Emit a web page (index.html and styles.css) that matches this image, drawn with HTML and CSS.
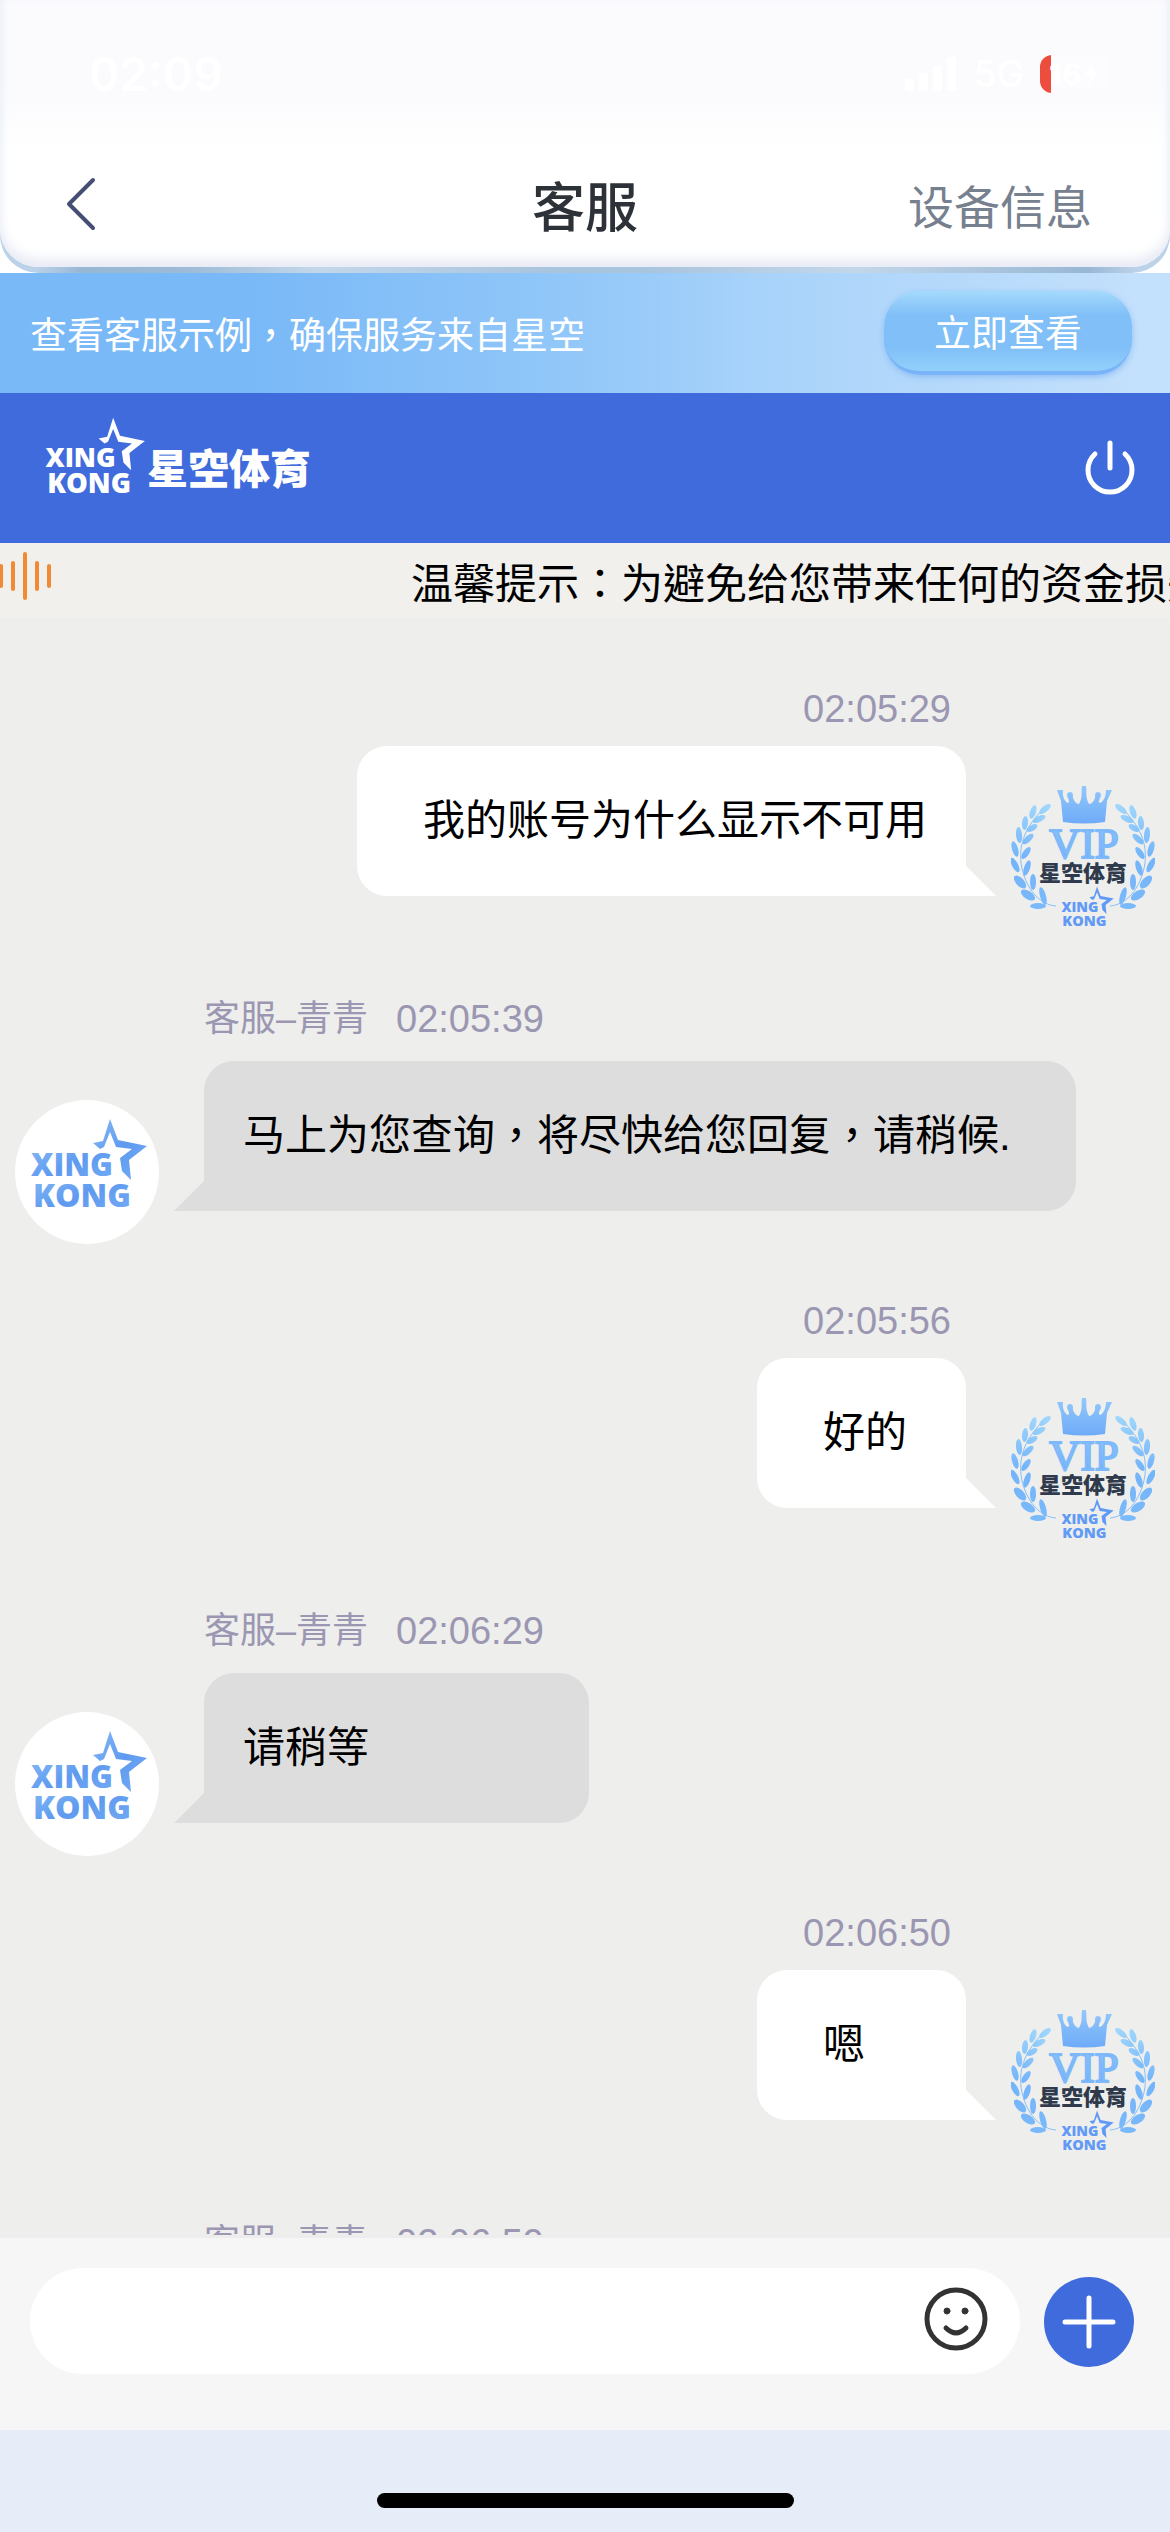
FILE: index.html
```html
<!DOCTYPE html>
<html lang="zh-Hant">
<head>
  <meta charset="UTF-8">
  <meta name="viewport" content="width=device-width, initial-scale=1.0">
  <title>客服</title>
  <link rel="stylesheet" href="styles.css">
</head>
<body>
  <!-- Shared drawings -->
  <svg class="sprite" aria-hidden="true">
    <defs>
      <linearGradient id="blue" x1="0" y1="0" x2="0" y2="1">
        <stop offset="0" stop-color="#93c8fb"/>
        <stop offset="1" stop-color="#6eabf8"/>
      </linearGradient>
      <linearGradient id="logo-blue" x1="0" y1="0" x2="1" y2="1">
        <stop offset="0" stop-color="#86bbf5"/>
        <stop offset="0.5" stop-color="#5f9af0"/>
        <stop offset="1" stop-color="#74acf4"/>
      </linearGradient>
      <linearGradient id="laurel-blue" gradientUnits="userSpaceOnUse" x1="0" y1="20" x2="0" y2="124">
        <stop offset="0" stop-color="#9ed6fc"/>
        <stop offset="0.5" stop-color="#74b4fa"/>
        <stop offset="1" stop-color="#7ab9fa"/>
      </linearGradient>
      <symbol id="logo" viewBox="16 18 118 91">
        <path d="M95 19L103 40L132 46L114 60L116 80L107 71L105 58L117 49L101 47L95 32L89 47L85 49L78 43L88 41Z"/>
        <text x="16" y="76" font-size="31">XING</text>
        <text x="18" y="107" font-size="32">KONG</text>
      </symbol>
      <g id="laurel">
        <path d="M45 121C30 120 14 105 10 78C8 58 14 42 34 22" fill="none" stroke="#84c0fa" stroke-width="1"/>
        <ellipse cx="22" cy="27" rx="3" ry="7" transform="rotate(18 22 27)"/>
        <ellipse cx="14" cy="38" rx="3" ry="7" transform="rotate(5 14 38)"/>
        <ellipse cx="8" cy="50" rx="3" ry="8" transform="rotate(-5 8 50)"/>
        <ellipse cx="4" cy="64" rx="3" ry="8" transform="rotate(-16 4 64)"/>
        <ellipse cx="4" cy="80" rx="3" ry="8" transform="rotate(-28 4 80)"/>
        <ellipse cx="9" cy="97" rx="4" ry="8" transform="rotate(-42 9 97)"/>
        <ellipse cx="17" cy="110" rx="4" ry="8" transform="rotate(-58 17 110)"/>
        <ellipse cx="27" cy="121" rx="8" ry="3"/>
        <ellipse cx="34" cy="24" rx="3" ry="7" transform="rotate(52 34 24)"/>
        <ellipse cx="28" cy="34" rx="3" ry="7" transform="rotate(65 28 34)"/>
        <ellipse cx="21" cy="43" rx="3" ry="6" transform="rotate(60 21 43)"/>
        <ellipse cx="17" cy="54" rx="3" ry="7" transform="rotate(48 17 54)"/>
        <ellipse cx="15" cy="68" rx="3" ry="7" transform="rotate(35 15 68)"/>
        <ellipse cx="16" cy="83" rx="3" ry="8" transform="rotate(18 16 83)"/>
        <ellipse cx="22" cy="97" rx="3" ry="8" transform="rotate(0 22 97)"/>
        <ellipse cx="32" cy="111" rx="3" ry="9" transform="rotate(-16 32 111)"/>
      </g>
      <symbol id="vip" viewBox="0 0 144 144">
        <g fill="url(#laurel-blue)">
          <use href="#laurel"/>
          <use href="#laurel" transform="translate(144 0) scale(-1 1)"/>
        </g>
        <g fill="url(#blue)">
          <path d="M52 37L50 16L46 5L52 5C51 12 54 17 57 18C60 16 56 13 56 10C56 6 62 6 62 10C61 14 65 19 68 19C72 12 70 7 71 1L75 1C76 7 74 12 78 19C81 19 85 14 84 10C84 6 90 6 90 10C90 13 86 16 89 18C92 17 95 12 95 5L101 5L96 16L94 37Q73 40 52 37Z"/>
          <text class="vip-word" x="73" y="73">VIP</text>
        </g>
        <text class="vip-brand" x="72" y="96">星空体育</text>
        <use href="#logo" x="50" y="101" width="54" height="41" fill="#609af6"/>
      </symbol>
    </defs>
  </svg>

  <div class="app">
    <header class="header">
      <div class="header-panel">
        <div class="status">
          <span class="clock">02:09</span>
          <div class="status-right">
            <svg width="52" height="34" viewBox="0 0 52 34" fill="#fff">
              <rect x="0" y="22" width="9" height="12" rx="2"/>
              <rect x="14" y="16" width="9" height="18" rx="2"/>
              <rect x="28" y="9" width="9" height="25" rx="2"/>
              <rect x="42" y="0" width="9" height="34" rx="2"/>
            </svg>
            <span class="network">5G</span>
            <span class="battery">16
              <svg width="14" height="24" viewBox="0 0 14 24" fill="#fff"><path d="M10 0L0 14H6L4 24L14 9H8Z"/></svg>
            </span>
          </div>
        </div>
        <nav class="nav">
          <button class="icon-button back" aria-label="返回">
            <svg width="32" height="56" viewBox="0 0 32 56" fill="none" stroke="#454e74" stroke-width="4" stroke-linecap="round" stroke-linejoin="round">
              <path d="M28 4L4 28L28 52"/>
            </svg>
          </button>
          <h1>客服</h1>
          <a href="#" class="device">设备信息</a>
        </nav>
      </div>
    </header>

    <div class="promo">
      <span>查看客服示例，确保服务来自星空</span>
      <button class="promo-button">立即查看</button>
    </div>

    <div class="brand">
      <div class="brand-logo">
        <svg width="102" height="78" fill="#fff"><use href="#logo"/></svg>
        <span>星空体育</span>
      </div>
      <button class="icon-button" aria-label="退出">
        <svg width="54" height="56" viewBox="0 0 54 56" fill="none" stroke="#fff" stroke-width="5" stroke-linecap="round">
          <path d="M27 3V28"/>
          <path d="M12 14A22 22 0 1 0 42 14"/>
        </svg>
      </button>
    </div>

    <div class="notice">
      <svg width="52" height="50" viewBox="0 0 52 50" stroke="#f08a35" stroke-width="4" stroke-linecap="round">
        <path d="M1 15V35M13 12V38M25 3V47M37 12V38M49 15V35"/>
      </svg>
      <p>温馨提示：为避免给您带来任何的资金损失</p>
    </div>

    <main class="chat">
      <section class="message user">
        <div class="meta"><time>02:05:29</time></div>
        <div class="row">
          <p class="bubble">我的账号为什么显示不可用</p>
          <svg class="avatar"><use href="#vip"/></svg>
        </div>
      </section>

      <section class="message agent">
        <div class="meta"><span>客服–青青</span><time>02:05:39</time></div>
        <div class="row">
          <svg class="avatar" viewBox="0 0 144 144">
            <use href="#logo" x="16" y="18" width="118" height="91" fill="url(#logo-blue)"/>
          </svg>
          <p class="bubble">马上为您查询，将尽快给您回复，请稍候.</p>
        </div>
      </section>

      <section class="message user">
        <div class="meta"><time>02:05:56</time></div>
        <div class="row">
          <p class="bubble">好的</p>
          <svg class="avatar"><use href="#vip"/></svg>
        </div>
      </section>

      <section class="message agent">
        <div class="meta"><span>客服–青青</span><time>02:06:29</time></div>
        <div class="row">
          <svg class="avatar" viewBox="0 0 144 144">
            <use href="#logo" x="16" y="18" width="118" height="91" fill="url(#logo-blue)"/>
          </svg>
          <p class="bubble">请稍等</p>
        </div>
      </section>

      <section class="message user">
        <div class="meta"><time>02:06:50</time></div>
        <div class="row">
          <p class="bubble">嗯</p>
          <svg class="avatar"><use href="#vip"/></svg>
        </div>
      </section>

      <section class="message agent">
        <div class="meta"><span>客服–青青</span><time>02:06:59</time></div>
      </section>
    </main>

    <form class="composer">
      <div class="field">
        <input type="text" aria-label="消息">
        <button type="button" class="icon-button" aria-label="表情">
          <svg width="64" height="64" viewBox="0 0 64 64" fill="none" stroke="#333" stroke-width="5" stroke-linecap="round">
            <circle cx="32" cy="32" r="29"/>
            <path d="M22 41Q32 51 42 41"/>
            <circle cx="23" cy="24" r="3" fill="#333" stroke-width="1"/>
            <circle cx="41" cy="24" r="3" fill="#333" stroke-width="1"/>
          </svg>
        </button>
      </div>
      <button type="button" class="icon-button add" aria-label="更多">
        <svg width="54" height="54" viewBox="0 0 54 54" fill="none" stroke="#fff" stroke-width="5" stroke-linecap="round">
          <path d="M27 3V51M3 27H51"/>
        </svg>
      </button>
    </form>

    <footer class="home"><div class="home-bar"></div></footer>
  </div>
</body>
</html>
```
FILE: styles.css
```css
* {
  box-sizing: border-box;
}
body {
  margin: 0;
  background: #fff;
  color: #000;
  font-family: "Liberation Sans", "Noto Sans CJK TC", sans-serif;
  font-size: 42px;
}
h1, p {
  margin: 0;
}
button {
  border: none;
  padding: 0;
  font-family: inherit;
  cursor: pointer;
}
svg {
  display: block;
  flex: none;
}
.sprite {
  position: absolute;
  width: 0;
  height: 0;
}
.icon-button {
  background: none;
}
.app {
  display: flex;
  flex-direction: column;
  height: 100vh;
}

/* Header */
.header {
  flex: none;
  padding-bottom: 6px;
  border-radius: 0 0 38px 38px;
  background: linear-gradient(90deg, #bcd2e8 3%, #98b7d4 7%, #9dbbd7 16%, #c3d7e9 27%, #a9c4de 47%, #a9c4de 55%, #c3d7e9 73%, #98b7d4 93%, #bcd2e8 97%);
}
.header-panel {
  border-radius: 0 0 38px 38px;
  background: linear-gradient(#fbfbfe 90px, #fff 150px);
  box-shadow: inset 0 -8px 12px #e8ebf5, inset 0 0 6px #f6f7fc;
}
.status {
  display: flex;
  align-items: center;
  justify-content: space-between;
  height: 147px;
  padding: 0 60px 0 89px;
  color: #fff;
  font-family: Inter, sans-serif;
}
.clock {
  font-size: 46px;
  font-weight: 600;
}
.status-right {
  display: flex;
  align-items: center;
  gap: 16px;
}
.network {
  font-size: 37px;
  font-weight: 500;
}
.battery {
  display: flex;
  align-items: center;
  gap: 3px;
  width: 70px;
  height: 38px;
  padding-left: 9px;
  border-radius: 12px;
  background: linear-gradient(90deg, #ec4d3d 11px, #fcfcfe 11px);
  font-size: 30px;
  line-height: 38px;
  font-weight: 700;
}
.nav {
  display: grid;
  grid-template-columns: 1fr auto 1fr;
  align-items: center;
  height: 120px;
  padding: 0 65px 6px;
}
.back {
  justify-self: start;
}
.nav h1 {
  color: #2d3238;
  font-size: 53px;
  font-weight: 500;
}
.device {
  justify-self: end;
  margin-right: 13px;
  color: #76808e;
  font-size: 46px;
  text-decoration: none;
}

/* Promo strip */
.promo {
  flex: none;
  display: flex;
  align-items: center;
  justify-content: space-between;
  height: 120px;
  padding: 0 38px 0 30px;
  background: linear-gradient(90deg, #7ab9f7 22%, #93c8f9 50%, #a9d3fa 66%, #c3e0fc 97%);
  color: #fff;
  font-size: 37px;
}
.promo-button {
  width: 248px;
  height: 84px;
  border-bottom: 4px solid #79b3f8;
  border-radius: 36px;
  background: linear-gradient(#a4dafc, #80bff8 30%, #80bff8 70%, #92d0fb);
  box-shadow: 0 2px 6px #8dbdf5;
  color: #fff;
  font-size: 37px;
}

/* Brand bar */
.brand {
  flex: none;
  display: flex;
  align-items: center;
  justify-content: space-between;
  height: 150px;
  padding: 0 33px 0 45px;
  background: #3f6bdc;
}
.brand-logo {
  display: flex;
  align-items: flex-end;
  margin-bottom: 24px;
}
.brand-logo span {
  color: #fff;
  font-size: 41px;
  font-weight: 900;
  line-height: 50px;
}
#logo text {
  font-family: "Open Sans", sans-serif;
  font-weight: 800;
}
.vip-word {
  font-family: "Liberation Serif", serif;
  font-size: 43px;
  stroke: #7db9fa;
  stroke-width: 2px;
  text-anchor: middle;
}
.vip-brand {
  fill: #2f3b4c;
  font-size: 22px;
  font-weight: 900;
  text-anchor: middle;
}

/* Scrolling notice */
.notice {
  flex: none;
  display: flex;
  align-items: center;
  gap: 359px;
  height: 75px;
  background: #f1f0ed;
  overflow: hidden;
}
.notice svg {
  margin-bottom: 10px;
}
.notice p {
  flex: none;
  white-space: nowrap;
}

/* Chat */
.chat {
  flex: 1;
  min-height: 0;
  padding-top: 66px;
  border-bottom: 3px solid #ededed;
  background: #eeeeec;
  overflow: hidden;
}
.meta {
  display: flex;
  gap: 28px;
  color: #9b97b2;
  font-size: 36px;
  line-height: 50px;
}
.meta time {
  font-size: 38px;
}
.row {
  display: flex;
  align-items: flex-start;
}
.bubble {
  position: relative;
  padding: 45px 39px;
  border-radius: 30px;
  line-height: 60px;
}
.bubble::after {
  content: "";
  position: absolute;
  bottom: 0;
  width: 30px;
  height: 30px;
}
.avatar {
  width: 144px;
  height: 144px;
  margin-top: 39px;
}
.user {
  margin-bottom: 65px;
}
.user .meta {
  justify-content: flex-end;
  margin-bottom: 12px;
  padding-right: 219px;
}
.user .row {
  justify-content: flex-end;
  gap: 45px;
  padding-right: 15px;
}
.user .bubble {
  min-width: 209px;
  padding-left: 66px;
  border-bottom-right-radius: 0;
  background: #fff;
}
.user .bubble::after {
  left: 100%;
  background: #fff;
  clip-path: polygon(0 0, 100% 100%, 0 100%);
}
.agent {
  margin-bottom: 52px;
}
.agent .meta {
  margin-bottom: 17px;
  padding-left: 204px;
}
.agent .row {
  gap: 45px;
  padding-left: 15px;
}
.agent .avatar {
  border-radius: 50%;
  background: #fff;
}
.agent .bubble {
  min-width: 385px;
  padding-right: 65px;
  border-bottom-left-radius: 0;
  background: #ddd;
}
.agent .bubble::after {
  right: 100%;
  background: #ddd;
  clip-path: polygon(100% 0, 100% 100%, 0 100%);
}

/* Composer */
.composer {
  flex: none;
  display: flex;
  align-items: flex-start;
  gap: 24px;
  padding: 30px 36px 56px 30px;
  background: #f6f6f6;
}
.field {
  flex: 1;
  display: flex;
  align-items: center;
  height: 106px;
  padding: 0 32px 4px 40px;
  border-radius: 53px;
  background: #fff;
}
.field input {
  flex: 1;
  min-width: 0;
  border: none;
  outline: none;
  background: none;
  font: inherit;
}
.add {
  display: flex;
  align-items: center;
  justify-content: center;
  width: 90px;
  height: 90px;
  margin-top: 9px;
  border-radius: 50%;
  background: #3f6bdc;
}
.home {
  flex: none;
  padding: 63px 0 24px;
  background: #e6edf8;
}
.home-bar {
  width: 417px;
  height: 15px;
  margin: 0 auto;
  border-radius: 8px;
  background: #000;
}
```
